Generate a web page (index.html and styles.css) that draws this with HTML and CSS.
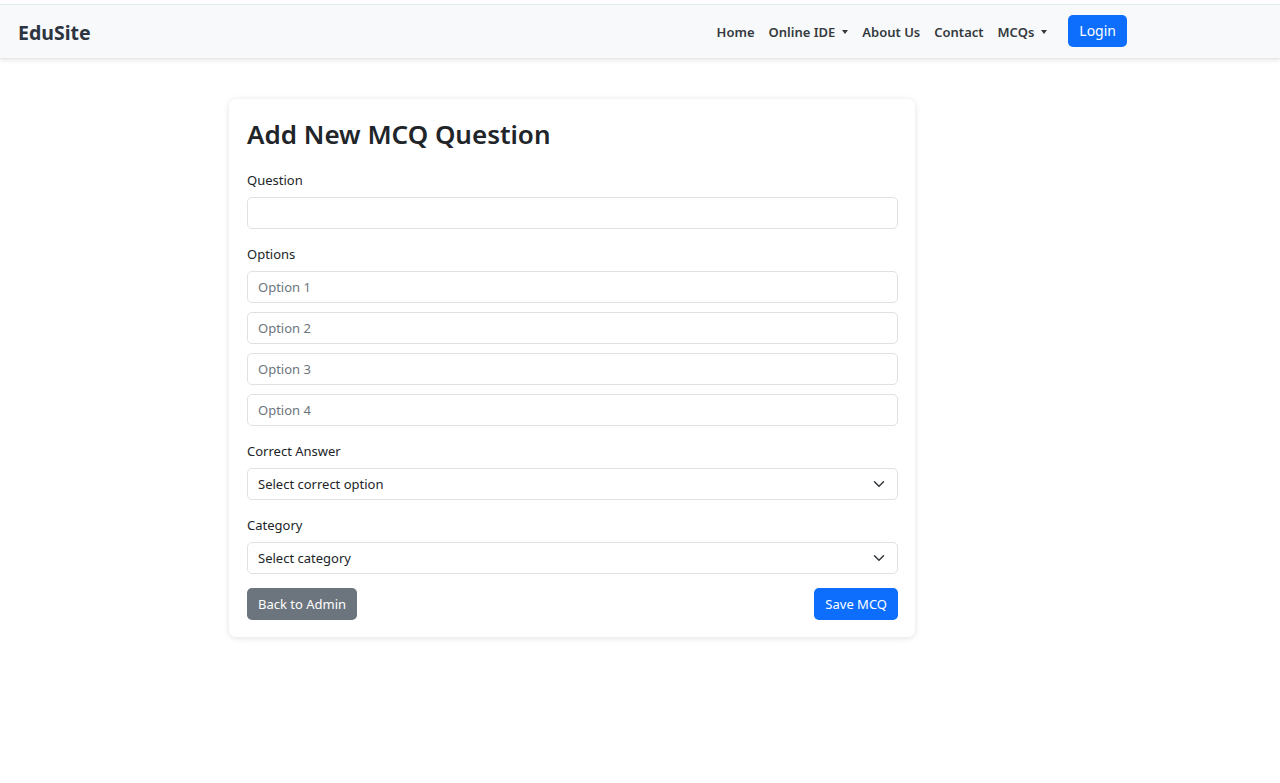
FILE: index.html
```html
<!DOCTYPE html>
<html lang="en">
<head>
<meta charset="utf-8">
<title>Add New MCQ Question</title>
<link rel="stylesheet" href="styles.css">
</head>
<body>
<div class="topline"></div>
<nav class="navbar">
  <a class="brand" href="#">EduSite</a>
  <ul class="nav">
    <li><a href="#">Home</a></li>
    <li><a href="#" class="dropdown">Online IDE</a></li>
    <li><a href="#">About Us</a></li>
    <li><a href="#">Contact</a></li>
    <li><a href="#" class="dropdown">MCQs</a></li>
  </ul>
  <a class="btn btn-login" href="#">Login</a>
</nav>
<main class="page">
  <section class="card">
    <h2 class="title">Add New MCQ Question</h2>
    <form class="form">
      <div class="group">
        <label class="label">Question</label>
        <input class="control" type="text">
      </div>
      <div class="group">
        <label class="label">Options</label>
        <div class="options">
          <input class="control" type="text" placeholder="Option 1">
          <input class="control" type="text" placeholder="Option 2">
          <input class="control" type="text" placeholder="Option 3">
          <input class="control" type="text" placeholder="Option 4">
        </div>
      </div>
      <div class="group">
        <label class="label">Correct Answer</label>
        <div class="select">
          <span>Select correct option</span>
          <svg class="chev" width="12" height="12" viewBox="0 0 16 16"><path d="M2 5l6 6 6-6" fill="none" stroke="#343a40" stroke-width="2" stroke-linecap="round" stroke-linejoin="round"/></svg>
        </div>
      </div>
      <div class="group">
        <label class="label">Category</label>
        <div class="select">
          <span>Select category</span>
          <svg class="chev" width="12" height="12" viewBox="0 0 16 16"><path d="M2 5l6 6 6-6" fill="none" stroke="#343a40" stroke-width="2" stroke-linecap="round" stroke-linejoin="round"/></svg>
        </div>
      </div>
      <div class="actions">
        <a class="btn btn-secondary" href="#">Back to Admin</a>
        <a class="btn btn-primary" href="#">Save MCQ</a>
      </div>
    </form>
  </section>
</main>
</body>
</html>
```

FILE: styles.css
```css
* { box-sizing: border-box; }
html, body { margin: 0; padding: 0; }
body {
  font-family: "Noto Sans", "Open Sans", sans-serif;
  color: #212529;
  background: #fff;
  font-size: 13px;
}
.topline {
  height: 5px;
  background: #fff;
  border-bottom: 1px solid #e3f1f1;
}
.navbar {
  height: 54px;
  background: #f8f9fa;
  display: flex;
  align-items: center;
  padding: 0 18px;
  box-shadow: 0 2px 4px rgba(0,0,0,0.08);
  border-bottom: 1px solid #e6e8ea;
}
.brand {
  font-size: 19.5px;
  font-weight: 700;
  color: #2b3440;
  text-decoration: none;
  margin-top: 1px;
}
.nav {
  list-style: none;
  margin: 0 0 0 auto;
  padding: 0;
  display: flex;
  gap: 14px;
}
.nav a {
  color: #343a40;
  text-decoration: none;
  font-size: 13px;
  font-weight: 600;
}
.nav a.dropdown::after {
  content: "";
  display: inline-block;
  margin-left: 7px;
  vertical-align: 3px;
  border-top: 4px solid #343a40;
  border-left: 3.5px solid transparent;
  border-right: 3.5px solid transparent;
}
.btn {
  display: inline-block;
  text-decoration: none;
  border-radius: 5px;
  font-size: 13px;
  line-height: 20px;
  padding: 6px 11px;
  color: #fff;
}
.btn-login {
  background: #0d6efd;
  margin-left: 21px;
  margin-right: 135px;
  margin-top: -2px;
  font-size: 14px;
  padding: 6px 11px;
}
.page {
  padding: 40px 0 40px 229px;
}
.card {
  width: 686px;
  background: #fff;
  border-radius: 7px;
  box-shadow: 0 1px 6px rgba(0,0,0,0.12);
  padding: 17px 17px 17px 18px;
}
.title {
  font-size: 26px;
  font-weight: 600;
  margin: 0 0 18px;
  line-height: 36px;
  color: #212529;
}
.form { display: flex; flex-direction: column; gap: 15px; }
.group { display: flex; flex-direction: column; }
.label {
  font-size: 13px;
  line-height: 20px;
  margin-bottom: 7px;
  color: #212529;
}
.options { display: flex; flex-direction: column; gap: 9px; }
.control, .select {
  height: 32px;
  width: 100%;
  border: 1px solid #dee2e6;
  border-radius: 5px;
  padding: 0 10px;
  font-family: inherit;
  font-size: 13px;
  color: #212529;
  background: #fff;
}
.control::placeholder { color: #6c757d; }
.select {
  display: flex;
  align-items: center;
  justify-content: space-between;
  padding-right: 12px;
}
.actions {
  display: flex;
  justify-content: space-between;
  margin-top: -1px;
}
.btn-secondary { background: #6c757d; }
.btn-primary { background: #0d6efd; }
```
